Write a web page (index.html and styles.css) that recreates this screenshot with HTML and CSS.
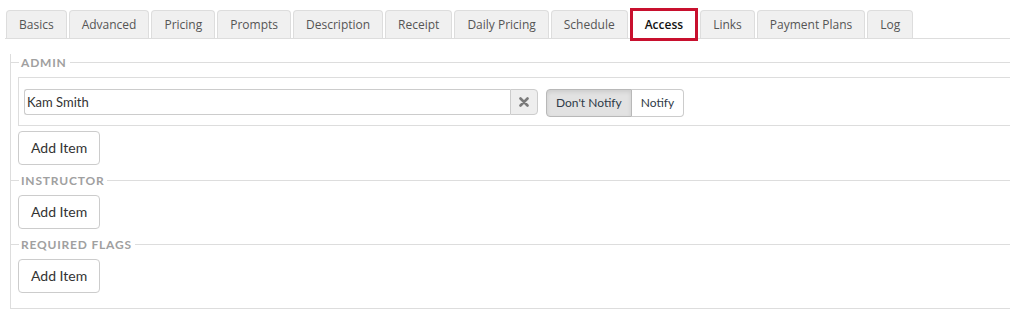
FILE: index.html
```html
<!DOCTYPE html>
<html lang="en">
<head>
	<meta charset="UTF-8">
	<title>Access</title>
	<link rel="stylesheet" href="styles.css">
</head>
<body>
	<section class="page">
		<ul class="tabs">
			<li>Basics</li>
			<li>Advanced</li>
			<li>Pricing</li>
			<li>Prompts</li>
			<li>Description</li>
			<li>Receipt</li>
			<li>Daily Pricing</li>
			<li>Schedule</li>
			<li class="active">Access</li>
			<li>Links</li>
			<li>Payment Plans</li>
			<li>Log</li>
		</ul>

		<div class="panel">
			<div class="group first">
				<h3 class="legend"><span>Admin</span></h3>
				<div class="item">
					<div class="pick">
						<input type="text" value="Kam Smith">
						<a href="javascript:;" class="clear">
							<svg width="10" height="10" viewBox="0 0 10 10"><path d="M1.5 1.5 L8.5 8.5 M8.5 1.5 L1.5 8.5" stroke="#7a7a7a" stroke-width="2.6" stroke-linecap="round"/></svg>
						</a>
					</div>
					<div class="toggle">
						<a href="javascript:;" class="on">Don't Notify</a>
						<a href="javascript:;">Notify</a>
					</div>
				</div>
				<a href="javascript:;" class="btn add">Add Item</a>
			</div>

			<div class="group">
				<h3 class="legend"><span>Instructor</span></h3>
				<a href="javascript:;" class="btn">Add Item</a>
			</div>

			<div class="group">
				<h3 class="legend"><span>Required Flags</span></h3>
				<a href="javascript:;" class="btn">Add Item</a>
			</div>
		</div>
	</section>
</body>
</html>
```

FILE: styles.css
```css
*{margin: 0; padding: 0; box-sizing: border-box;}
li{list-style: none;}
a{text-decoration: none;}
html, body{overflow: hidden;}
body{background: #fff; font-family: Lato, "Open Sans", sans-serif; color: #333;}

.page{width: 1060px; padding: 10px 0 0 5px;}

.tabs{display: flex; align-items: flex-end; padding-left: 1px; border-bottom: 1px solid #ddd;}
.tabs li{margin-right: 2px; padding: 5px 12px; font: 12px/17px "Open Sans", sans-serif; color: #555; background: #f0f0f0; border: 1px solid #ddd; border-bottom: none; border-radius: 4px 4px 0 0;}
.tabs li.active{margin: -2px 2px -3px 0; padding: 5px 12px; background: #fff; color: #111; font-weight: 600; border: 3px solid #c8102e; border-radius: 0;}

.panel{margin: 23px 0 0 5px; padding: 0 0 15px 7px; border-left: 1px solid #ddd; border-bottom: 1px solid #ddd;}

.legend{display: flex; align-items: center; height: 17px; margin: 7px 0 6px -7px; font-size: 12px; line-height: 17px; font-weight: 700; letter-spacing: .8px; text-transform: uppercase; color: #a0a0a0;}
.legend:before{content: ""; width: 8px; height: 1px; background: #ddd;}
.legend:after{content: ""; flex: 1; height: 1px; background: #ddd;}
.legend span{padding: 0 3px 0 2px;}
.group.first .legend{margin-top: -8px;}

.item{display: flex; align-items: flex-start; margin-top: 1px; padding: 11px 5px 8px; border: 1px solid #ddd;}
.pick{display: flex; width: 514px;}
.pick input{flex: 1; height: 26px; padding: 0 2px; font: 13px Lato, sans-serif; color: #333; border: 1px solid #ccc; border-right: none; border-radius: 3px 0 0 3px; outline: none;}
.pick .clear{display: flex; align-items: center; justify-content: center; width: 28px; height: 26px; background: #eee; border: 1px solid #ccc; border-radius: 0 4px 4px 0;}

.toggle{display: flex; margin-left: 8px;}
.toggle a{padding: 4px 9px; font-size: 12px; line-height: 18px; color: #2f3b48; background: #fff; border: 1px solid #ccc;}
.toggle a:first-child{border-radius: 4px 0 0 4px;}
.toggle a:last-child{border-left: none; border-radius: 0 4px 4px 0;}
.toggle a.on{background: #e2e2e2; border-color: #b8b8b8; box-shadow: inset 0 2px 4px rgba(0,0,0,.1);}

.btn{display: inline-block; padding: 6px 12px; font-size: 14px; line-height: 20px; color: #333; background: #fff; border: 1px solid #ccc; border-radius: 4px;}
.btn.add{margin-top: 5px;}
```
